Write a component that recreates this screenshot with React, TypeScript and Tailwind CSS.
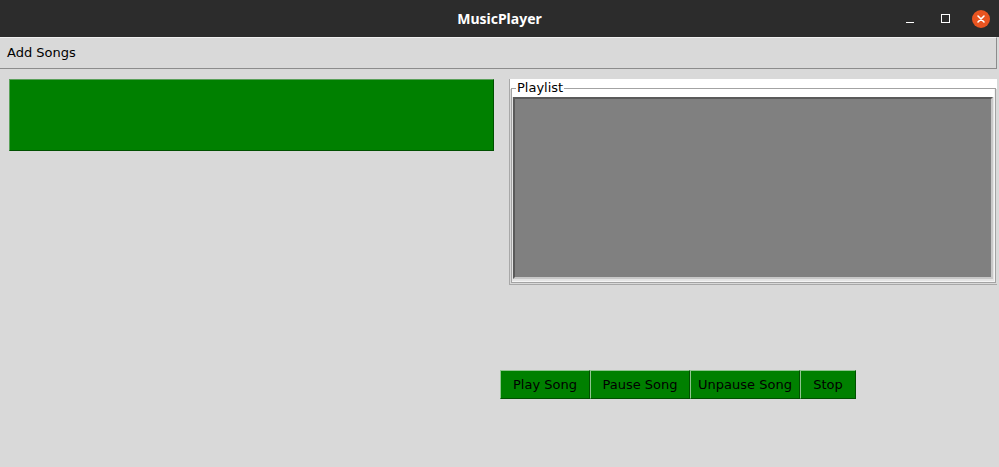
export default function App() {
  const buttons = [
    { text: "Play Song", w: "w-[90px]" },
    { text: "Pause Song", w: "w-[100px]" },
    { text: "Unpause Song", w: "w-[110px]" },
    { text: "Stop", w: "w-[56px]" },
  ]

  return (
    <div className="w-[999px] h-[467px] bg-[#d9d9d9] flex flex-col overflow-hidden font-['DejaVu_Sans',sans-serif] text-[13px] text-black">
      {/* title bar */}
      <div className="h-[37px] bg-[#2c2c2c] flex items-center relative shrink-0">
        <div className="flex-1 text-center text-white font-bold text-[14px] font-['Noto_Sans',sans-serif]">MusicPlayer</div>
        <div className="absolute right-0 top-0 h-[37px] flex items-center">
          <div className="w-[8px] h-[1.5px] bg-white mr-[27px] mt-[8px]" />
          <div className="w-[9px] h-[9px] border-[1.5px] border-white mr-[22px]" />
          <div className="w-[18px] h-[18px] rounded-full bg-[#e95420] flex items-center justify-center mr-[9px]">
            <svg width="10" height="10" viewBox="0 0 10 10">
              <path d="M2 2 L8 8 M8 2 L2 8" stroke="white" strokeWidth="1.6" strokeLinecap="round" />
            </svg>
          </div>
        </div>
      </div>

      {/* menu bar */}
      <div className="h-[32px] shrink-0 border-b border-r border-[#8c8c8c] border-t border-t-[#f0f0f0] w-[997px] flex items-center pl-[7px]">
        Add Songs
      </div>

      {/* content */}
      <div className="flex">
        <div className="w-[500px] shrink-0">
          <div className="ml-[9px] mt-[10px] w-[485px] h-[72px] bg-[#008000] border border-[#5aa05a] border-r-[#005000] border-b-[#005000]" />
        </div>

        <div className="flex flex-col">
          <div className="relative ml-[9px] mt-[10px] w-[488px] h-[206px] border-l border-b border-[#a8a8a8]">
            <div className="h-[10px] bg-white" />
            <div className="absolute left-[1px] right-[1px] top-[9px] bottom-[1px] border border-[#a3a3a3] bg-[#e4e4e4]">
              <div className="h-full border-r border-b border-[#f4f4f4] flex flex-col">
                <div className="h-[8px] shrink-0 bg-white" />
                <div className="flex-1 mx-[1px] mb-[2px] bg-[#808080] border-2 border-t-[#5a5a5a] border-l-[#5a5a5a] border-r-[#c8c8c8] border-b-[#c8c8c8]" />
              </div>
            </div>
            <div className="absolute left-[6px] top-[1px] px-[1px] bg-white leading-[16px]">Playlist</div>
          </div>

          <div className="flex mt-[85px]">
            {buttons.map((b) => (
              <div
                key={b.text}
                className={`${b.w} h-[29px] bg-[#008000] border border-[#8fc48f] border-r-[#005000] border-b-[#005000] flex items-center justify-center`}
              >
                {b.text}
              </div>
            ))}
          </div>
        </div>
      </div>
    </div>
  )
}
